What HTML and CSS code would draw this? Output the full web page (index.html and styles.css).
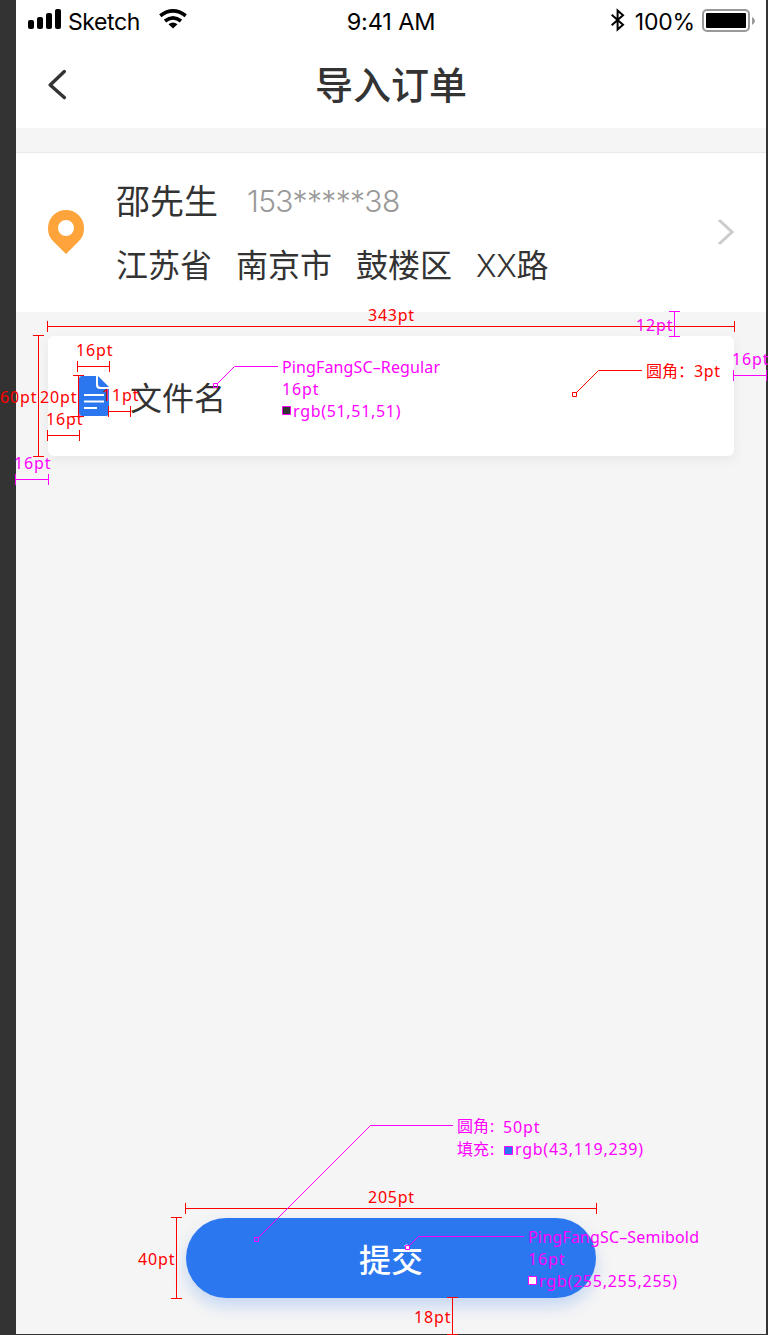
FILE: index.html
```html
<!DOCTYPE html>
<html lang="zh-CN">
<head>
<meta charset="utf-8">
<title>导入订单</title>
<link rel="stylesheet" href="styles.css">
</head>
<body>
<main class="artboard">
  <header class="top">
    <div class="status">
      <div class="status-left">
        <svg class="signal" width="34" height="20" viewBox="0 0 34 20"><rect x="0" y="11" width="6" height="9" rx="2"/><rect x="9" y="8" width="6" height="12" rx="2"/><rect x="18" y="4" width="6" height="16" rx="2"/><rect x="27" y="0" width="6" height="20" rx="2"/></svg>
        <span class="carrier">Sketch</span>
        <svg class="wifi" width="28" height="20" viewBox="0 0 28 20"><g fill="none" stroke="#000" stroke-width="3.6"><path d="M1.3 6.8Q14-2.900 26.7 6.8"/><path d="M6 12Q14 5.7 22 12"/></g><path d="M9.500 15.2Q14 11.800 18.500 15.2L14 19.600z"/></svg>
      </div>
      <span class="clock">9:41 AM</span>
      <div class="status-right">
        <svg class="bluetooth" width="16" height="24" viewBox="0 0 16 24"><path d="M1.7 6.7L13 16.8L7.6 21.5V2.5L13 7.2L1.7 17.3" fill="none" stroke="#000" stroke-width="2"/></svg>
        <span class="percent">100%</span>
        <svg class="battery" width="54" height="24" viewBox="0 0 54 24"><rect x="1" y="1" width="46" height="21" rx="4" fill="none" stroke="#999" stroke-width="2"/><rect x="4" y="4" width="40" height="15" rx="1"/><path d="M50 8Q53 9.5 53 12T50 16z" fill="#999"/></svg>
      </div>
    </div>
    <div class="navbar">
      <svg class="back" width="20" height="32" viewBox="0 0 20 32"><path d="M16.3 2.6L2.2 16L16.3 28.6" fill="none" stroke="#333" stroke-width="3.4" stroke-linecap="round" stroke-linejoin="round"/></svg>
      <h1 class="title">导入订单</h1>
    </div>
  </header>

  <section class="address">
    <svg class="pin" width="36" height="44" viewBox="0 0 36 44"><path fill="#ffa43b" fill-rule="evenodd" d="M18 0A18 18 0 0 1 36 18C36 24 34 28 31 31L18 44L5 31C2 28 0 24 0 18A18 18 0 0 1 18 0ZM18 10A8 8 0 1 0 18 26A8 8 0 1 0 18 10Z"/></svg>
    <div class="contact">
      <div class="person"><span class="name">邵先生</span><span class="phone">153*****38</span></div>
      <div class="place"><span>江苏省</span><span>南京市</span><span>鼓楼区</span><span class="road"><span class="latin">XX</span>路</span></div>
    </div>
    <svg class="forward" width="17" height="28" viewBox="0 0 17 28"><path d="M2 2L15 14L2 26" fill="none" stroke="#ccc" stroke-width="3"/></svg>
  </section>

  <section class="file">
    <svg class="doc" width="30" height="40" viewBox="0 0 30 40"><path fill="#2b77ef" d="M3 0H17V9Q17 13 21 13H30V37Q30 40 27 40H3Q0 40 0 37V3Q0 0 3 0Z"/><path fill="#2b77ef" d="M19 0L30 11H22Q19 11 19 8Z"/><path d="M5 19H25M5 25.500H25M5 32H18" stroke="#fff" stroke-width="2"/></svg>
    <span class="file-name">文件名</span>
  </section>

  <footer class="actions"><button class="submit">提交</button></footer>
</main>

<svg class="specs" width="768" height="1335" viewBox="0 0 768 1335">
  <g class="red">
    <path d="M47.500 326.500H734.500M47.500 321V332M734.500 321V332"/>
    <path d="M38.500 335.500V456.500M33 335.500H44M33 456.500H44"/>
    <path d="M77.500 366.500H109.500M77.500 361V372M109.500 361V372"/>
    <path d="M78.500 375.500V416.500M73 375.500H84M71 416.500H84"/>
    <path d="M108.500 411.500H130.500M108.500 406V417M130.500 406V417"/>
    <path d="M598.500 370.500H642M598.500 370.500L576 393M572.500 392.500h4v4h-4z"/>
    <path d="M185.500 1208.500H596.500M185.500 1203V1214M596.500 1203V1214"/>
    <path d="M176.500 1217.500V1298.500M171 1217.500H182M171 1298.500H182"/>
    <path d="M452.500 1297.500V1334.500M447 1297.500H458M447 1334.500H458"/>
    <path d="M47.500 435.500H79.500M47.500 430V441M79.500 430V441"/>
    <text x="368" y="321" textLength="46">343pt</text>
    <text x="0" y="403" textLength="36.500">60pt</text>
    <text x="40" y="403" textLength="36.500">20pt</text>
    <text x="76" y="356" textLength="36.500">16pt</text>
    <text x="46" y="425" textLength="36.500">16pt</text>
    <text x="102" y="401" textLength="36.500">11pt</text>
    <text x="646" y="377">圆角：</text><text x="694" y="377" textLength="26">3pt</text>
    <text x="368" y="1203" textLength="46">205pt</text>
    <text x="138" y="1265" textLength="36.500">40pt</text>
    <text x="414" y="1323" textLength="36.500">18pt</text>
  </g>
  <g class="magenta">
    <path d="M674.500 311.500V336.500M669 311.500H680M669 336.500H680"/>
    <path d="M733.500 375.500H766.500M733.500 370V381M766.500 370V381"/>
    <path d="M15.500 479.500H48.500M15.500 474V485M48.500 474V485"/>
    <path d="M278 366.500H234.500M234.500 366.500L217 384M213.500 383.500h4v4h-4z"/>
    <path d="M453 1125.500H370.500M370.500 1125.500L258 1238M254.500 1237.500h4v4h-4z"/>
    <path d="M524 1236.500H418.500M418.500 1236.500L409 1246"/>
    <path d="M405.500 1245.500h4v4h-4z" class="fill-white"/>
    <path d="M282.500 406.500h8v8h-8z" class="fill-dark"/>
    <path d="M504.500 1146.500h8v8h-8z" class="fill-blue"/>
    <path d="M528.500 1276.500h8v8h-8z" class="fill-white"/>
    <text x="636" y="331" textLength="36.500">12pt</text>
    <text x="732" y="365" textLength="36.500">16pt</text>
    <text x="14" y="469" textLength="36.500">16pt</text>
    <text x="282" y="373" textLength="158">PingFangSC–Regular</text>
    <text x="282" y="395" textLength="36.500">16pt</text>
    <text x="293" y="417" textLength="107.500">rgb(51,51,51)</text>
    <text x="457" y="1132">圆角</text><text x="490" y="1132">:</text><text x="503" y="1133" textLength="36.500">50pt</text>
    <text x="457" y="1155">填充</text><text x="490" y="1155">:</text><text x="515" y="1155" textLength="128">rgb(43,119,239)</text>
    <text x="528" y="1243" textLength="171">PingFangSC–Semibold</text>
    <text x="528" y="1265" textLength="36.500">16pt</text>
    <text x="539" y="1287" textLength="138">rgb(255,255,255)</text>
  </g>
</svg>
</body>
</html>
```
FILE: styles.css
```css
* { box-sizing: border-box; }
body {
  margin: 0;
  position: relative;
  width: 768px;
  height: 1335px;
  overflow: hidden;
  background: #333;
  color: #333;
  font-family: Inter, "Noto Sans CJK SC", sans-serif;
}
svg { display: block; flex: none; }
.artboard {
  display: flex;
  flex-direction: column;
  width: 750px;
  height: 1334px;
  margin-left: 16px;
  background: #f5f5f5;
}
.top { height: 128px; background: #fff; }
.status {
  display: grid;
  grid-template-columns: 1fr auto 1fr;
  height: 40px;
  padding: 0 12px;
  color: #000;
  font-size: 23px;
  line-height: 44px;
}
.status-left, .status-right { display: flex; }
.status-right { justify-content: flex-end; }
.signal { margin: 9px 6px 0 0; }
.carrier { width: 91px; letter-spacing: -0.4px; }
.wifi { margin-top: 9px; }
.clock { font-size: 23.5px; letter-spacing: -0.15px; }
.bluetooth { margin: 8px 9px 0 0; }
.percent { margin-right: 7px; letter-spacing: -0.2px; }
.battery { margin: 9px -2px 0 0; }
.navbar {
  display: grid;
  grid-template-columns: 60px 1fr 60px;
  height: 88px;
  padding: 0 30px;
}
.back { margin: 29px 0 0 2px; }
.title {
  margin: 0;
  text-align: center;
  font-size: 38px;
  font-weight: 500;
  line-height: 91px;
}
.address {
  display: flex;
  height: 160px;
  margin-top: 24px;
  padding: 0 32px;
  border-top: 1px solid #eaeaea;
  background: #fff;
}
.pin { margin: 57px 32px 0 0; }
.contact { flex: 1; }
.person { display: flex; height: 80px; padding-top: 22px; line-height: 53px; }
.name { width: 131px; font-size: 34px; }
.phone { color: #999; font-size: 30px; font-weight: 300; letter-spacing: -0.65px; line-height: 53px; }
.place { display: flex; gap: 24px; font-size: 32px; line-height: 66px; white-space: nowrap; }
.place span { flex: none; }
.latin { font-size: 31px; font-weight: 300; letter-spacing: -0.3px; }
.forward { margin-top: 65px; }
.file {
  display: flex;
  height: 120px;
  margin: 24px 32px 0;
  padding: 40px 31px;
  border-radius: 6px;
  background: #fff;
  box-shadow: 0 4px 12px rgba(0, 0, 0, .06);
}
.file-name { margin-left: 21px; font-size: 32px; line-height: 46px; }
.actions { display: flex; justify-content: center; margin-top: auto; padding-bottom: 36px; }
.submit {
  width: 410px;
  height: 80px;
  padding: 0;
  border: 0;
  border-radius: 40px;
  background: #2b77ef;
  box-shadow: 0 8px 16px rgba(43, 119, 239, .24);
  color: #fff;
  font: 500 32px/80px "Noto Sans CJK SC", sans-serif;
}
.specs {
  position: absolute;
  top: 0;
  left: 0;
  font-family: "Noto Sans", "Noto Sans CJK SC", sans-serif;
  font-size: 16px;
}
.specs path { fill: none; stroke: currentColor; stroke-width: 1; }
.specs text { fill: currentColor; }
.red { color: #f00; }
.magenta { color: #f0f; }
.specs .fill-white { fill: #fff; }
.specs .fill-dark { fill: #333; }
.specs .fill-blue { fill: #2b77ef; }
```
